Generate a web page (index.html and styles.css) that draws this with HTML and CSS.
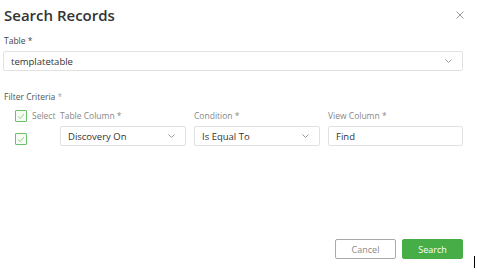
FILE: index.html
```html
<!DOCTYPE html>
<html lang="en">
<head>
<meta charset="UTF-8" />
<title>Search Records</title>
<link rel="stylesheet" href="styles.css">
</head>
<body>
  <div class="modal">
    <div class="modal-header">
      <h2 class="modal-title">Search Records</h2>
      <svg class="close" width="8" height="8" viewBox="0 0 8 8">
        <path d="M0.5 0.5 L7.5 7.5 M7.5 0.5 L0.5 7.5" stroke="#9a9a9a" stroke-width="1" fill="none"/>
      </svg>
    </div>

    <label class="field-label dark">Table *</label>
    <div class="select wide">
      <span>templatetable</span>
      <svg class="chev" width="7" height="4" viewBox="0 0 7 4"><path d="M0.5 0.5 L3.5 3.5 L6.5 0.5" stroke="#999" fill="none"/></svg>
    </div>

    <label class="field-label section">Filter Criteria <span class="star">*</span></label>

    <div class="filter-grid">
      <div class="check-cell">
        <span class="checkbox"><svg width="8" height="7" viewBox="0 0 8 7"><path d="M1 3.5 L3.2 5.6 L7 1" stroke="#8fd08b" fill="none"/></svg></span>
        <span class="col-label">Select</span>
      </div>
      <div class="col-label">Table Column *</div>
      <div class="col-label">Condition *</div>
      <div class="col-label">View Column *</div>

      <div class="check-cell second">
        <span class="checkbox"><svg width="8" height="7" viewBox="0 0 8 7"><path d="M1 3.5 L3.2 5.6 L7 1" stroke="#8fd08b" fill="none"/></svg></span>
      </div>
      <div class="select">
        <span>Discovery On</span>
        <svg class="chev" width="7" height="4" viewBox="0 0 7 4"><path d="M0.5 0.5 L3.5 3.5 L6.5 0.5" stroke="#999" fill="none"/></svg>
      </div>
      <div class="select">
        <span>Is Equal To</span>
        <svg class="chev" width="7" height="4" viewBox="0 0 7 4"><path d="M0.5 0.5 L3.5 3.5 L6.5 0.5" stroke="#999" fill="none"/></svg>
      </div>
      <div class="select">
        <span>Find</span>
      </div>
    </div>

    <div class="modal-footer">
      <button class="btn btn-cancel">Cancel</button>
      <button class="btn btn-search">Search</button>
    </div>
  </div>
  <div class="caret"></div>
</body>
</html>
```

FILE: styles.css
```css
body {
  margin: 0;
  background: #fff;
  font-family: "Open Sans", "Noto Sans", sans-serif;
  color: #333;
}
.modal {
  width: 477px;
  height: 277px;
  box-sizing: border-box;
  padding: 5px 14px 0 3px;
  position: relative;
}
.modal-header {
  display: flex;
  justify-content: space-between;
  align-items: center;
  height: 20px;
  padding-left: 1px;
}
.modal-title {
  margin: 0;
  font-size: 15px;
  font-weight: 600;
  line-height: 20px;
  color: #333;
}
.close {
  margin-right: -1px;
}
.field-label {
  display: block;
  font-size: 8.5px;
  line-height: 12px;
  padding-left: 1px;
  color: #555;
}
.field-label.dark {
  margin-top: 10px;
  color: #444;
}
.field-label.section {
  margin-top: 20px;
  color: #555;
}
.star {
  color: #aaa;
}
.select {
  height: 20px;
  box-sizing: border-box;
  border: 1px solid #e2e2e2;
  border-radius: 2px;
  display: flex;
  align-items: center;
  justify-content: space-between;
  padding: 0 10px 0 7px;
  font-size: 9.5px;
  color: #333;
  background: #fff;
}
.select.wide {
  margin-top: 4px;
}
.filter-grid {
  display: grid;
  grid-template-columns: 37px 126px 126px 135px;
  grid-template-rows: 12px 20px;
  column-gap: 8px;
  row-gap: 4px;
  margin-top: 7px;
  margin-left: 12px;
}
.col-label {
  font-size: 8.5px;
  line-height: 12px;
  color: #888;
}
.check-cell {
  display: flex;
  align-items: center;
  gap: 5px;
}
.check-cell.second {
  align-items: flex-end;
  padding-bottom: 1px;
}
.checkbox {
  width: 10px;
  height: 10px;
  flex: none;
  border: 1px solid #6cbf69;
  border-radius: 1px;
  background: #f6fbf5;
  display: flex;
  align-items: center;
  justify-content: center;
}
.modal-footer {
  display: flex;
  justify-content: flex-end;
  gap: 6px;
  margin-top: 93px;
}
.btn {
  width: 61px;
  height: 20px;
  border-radius: 2px;
  font-family: "Open Sans", "Noto Sans", sans-serif;
  font-size: 9px;
  padding: 0;
  cursor: pointer;
}
.btn-cancel {
  background: #fff;
  border: 1px solid #a9a9a9;
  color: #888;
}
.btn-search {
  background: #47ad47;
  border: 1px solid #47ad47;
  color: #fff;
}
.caret {
  position: absolute;
  left: 474px;
  top: 256px;
  width: 1px;
  height: 12px;
  background: #000;
}
```
